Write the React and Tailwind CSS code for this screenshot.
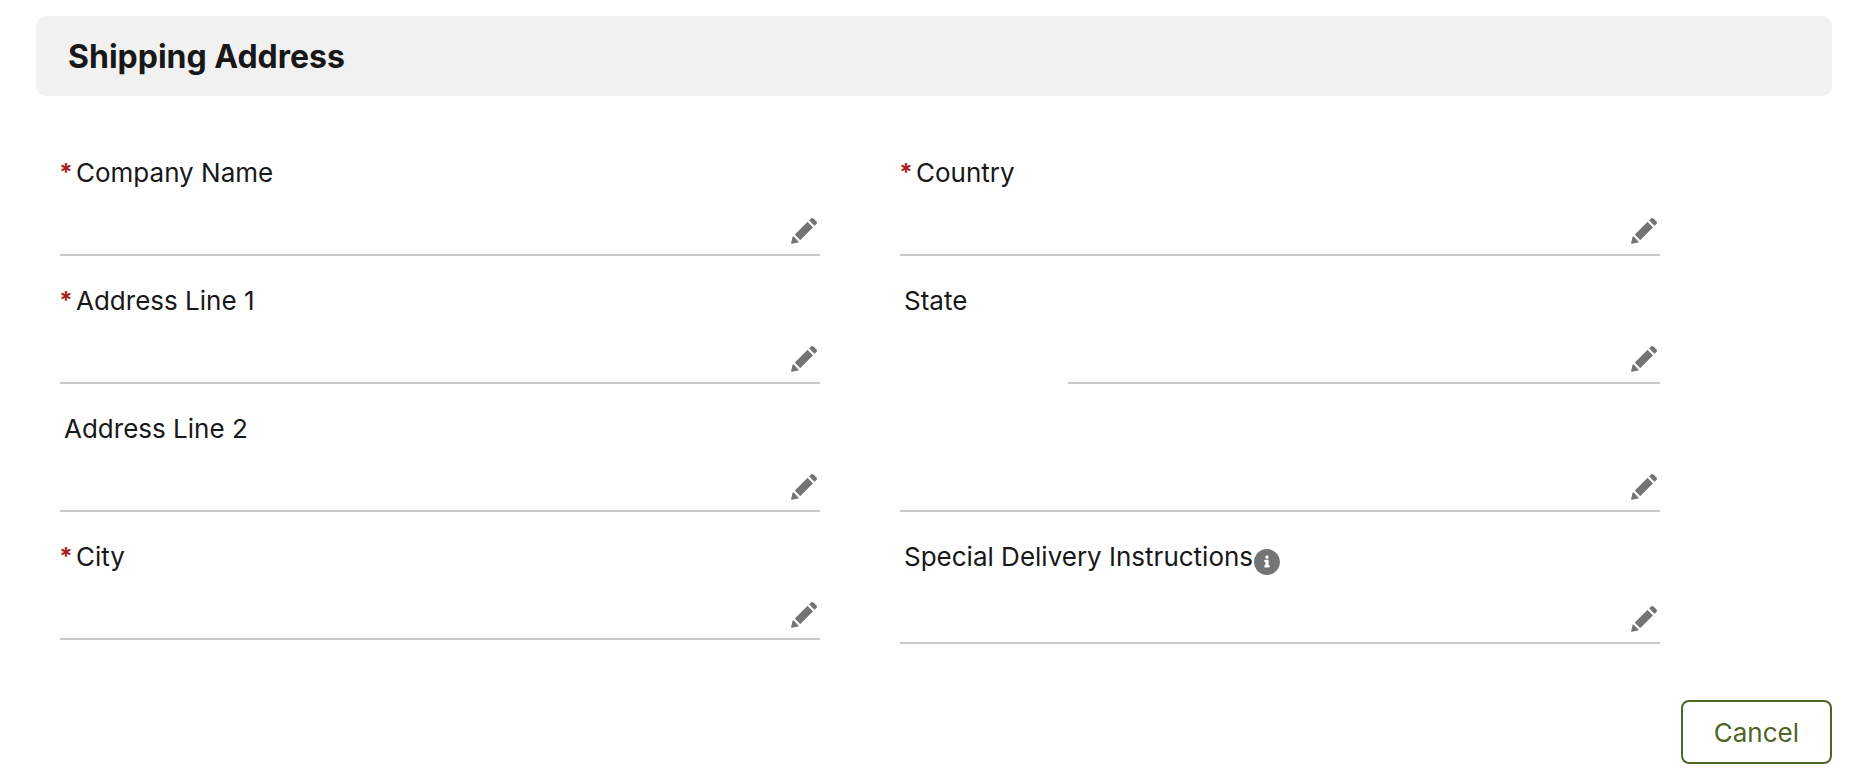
const leftFields = [
  { id: 'company', label: 'Company Name', required: true },
  { id: 'address1', label: 'Address Line 1', required: true },
  { id: 'address2', label: 'Address Line 2' },
  { id: 'city', label: 'City', required: true },
];

const rightFields = [
  { id: 'country', label: 'Country', required: true },
  { id: 'state', label: 'State', indent: true },
  { id: 'zip' },
  { id: 'instructions', label: 'Special Delivery Instructions', info: true },
];

const PencilIcon = () => (
  <svg viewBox="0 0 52 52" className="h-7 w-7 fill-[#747474]" aria-hidden="true">
    <path d="M9.5 33.4l8.9 8.9c.4.4 1 .4 1.4 0L42 20c.4-.4.4-1 0-1.4l-8.8-8.8c-.4-.4-1-.4-1.4 0L9.5 32.1c-.4.4-.4 1 0 1.3z" />
    <path d="M36.1 5.7c-.4.4-.4 1 0 1.4l8.8 8.8c.4.4 1 .4 1.4 0l2.5-2.5c1.6-1.5 1.6-3.9 0-5.5l-4.7-4.7c-1.6-1.6-4.1-1.6-5.7 0l-2.3 2.5z" />
    <path d="M2.1 48.2c-.2 1 .7 1.9 1.7 1.7l10.9-2.6c.4-.1.7-.3.9-.5l.2-.2c.2-.2.3-.9-.1-1.3l-9-9c-.4-.4-1.1-.3-1.3-.1l-.2.2c-.3.3-.4.6-.5.9L2.1 48.2z" />
  </svg>
);

const InfoIcon = () => (
  <svg viewBox="0 0 52 52" className="h-7 w-7 fill-[#747474]" aria-hidden="true">
    <path d="M26 2C12.7 2 2 12.7 2 26s10.7 24 24 24 24-10.7 24-24S39.3 2 26 2zm0 12.1c1.7 0 3 1.3 3 3s-1.3 3-3 3-3-1.3-3-3 1.3-3 3-3zm5 21c0 .5-.4.9-1 .9h-8c-.5 0-1-.3-1-.9v-2c0-.5.4-1.1 1-1.1.5 0 1-.3 1-.9v-4c0-.5-.4-1.1-1-1.1-.5 0-1-.3-1-.9v-2c0-.5.4-1.1 1-1.1h6c.5 0 1 .5 1 1.1v8c0 .5.4.9 1 .9.5 0 1 .5 1 1.1v2z" />
  </svg>
);

const Field = ({ field }) => (
  <div className="pt-7">
    <div className={`flex items-start ${field.info ? 'h-10' : 'h-9'}`}>
      {field.label && (
        <label
          htmlFor={field.id}
          className={`flex text-[26px] leading-[34px] ${field.required ? 'gap-1' : 'pl-1'}`}
        >
          {field.required && (
            <span className="flex w-3 justify-center text-[24px] font-bold text-[#aa1e1e]">*</span>
          )}
          {field.label}
        </label>
      )}
      {field.info && (
        <button type="button" aria-label="More information" className="pt-2">
          <InfoIcon />
        </button>
      )}
    </div>
    <div
      className={`flex h-16 items-end border-b-2 border-[#c9c9c9] pr-0.5 pb-[9px] ${
        field.indent ? 'ml-42' : ''
      }`}
    >
      <input
        id={field.id}
        type="text"
        required={field.required}
        aria-label={field.label ? undefined : 'Zip'}
        className="h-9 min-w-0 flex-1 bg-transparent text-[26px] outline-none"
      />
      <button type="button" aria-label="Edit">
        <PencilIcon />
      </button>
    </div>
  </div>
);

const App = () => {
  return (
    <main className="bg-white pt-4 pr-[30px] pb-4 pl-9 font-['Inter',sans-serif] text-[#181818]">
      <h2 className="rounded-[10px] bg-[#f1f1f1] px-8 pt-[21px] pb-[19px] text-[32px] leading-10 font-bold">
        Shipping Address
      </h2>

      <form>
        <div className="mt-8 grid grid-cols-2 items-start gap-20 pr-[172px] pl-6">
          <div>
            {leftFields.map((field) => (
              <Field key={field.id} field={field} />
            ))}
          </div>
          <div>
            {rightFields.map((field) => (
              <Field key={field.id} field={field} />
            ))}
          </div>
        </div>

        <div className="mt-14 flex justify-end">
          <button
            type="button"
            className="h-16 rounded-lg border-2 border-[#4f6528] px-[31px] text-[26px] text-[#4f6528]"
          >
            Cancel
          </button>
        </div>
      </form>
    </main>
  );
};

export default App;
